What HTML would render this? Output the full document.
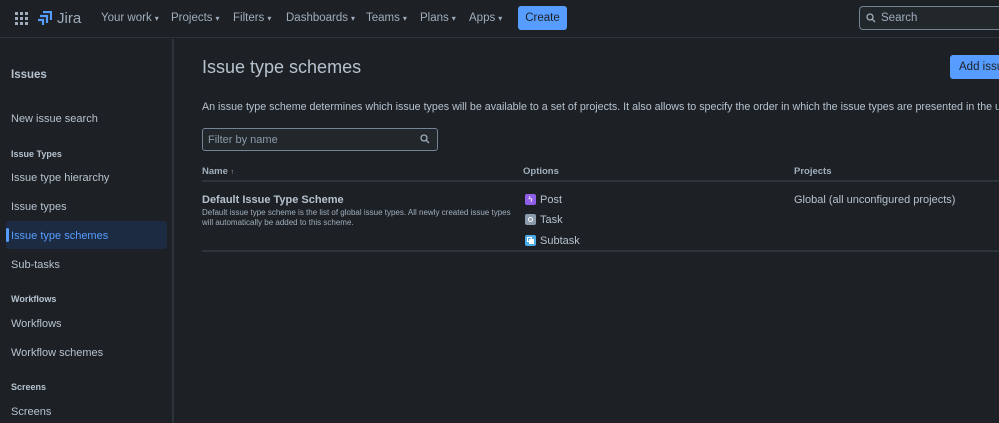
<!DOCTYPE html>
<html><head><style>
*{box-sizing:border-box;margin:0;padding:0}
html,body{width:999px;height:423px;overflow:hidden}
body{background:#1d2125;font-family:"Liberation Sans",sans-serif;color:#b6c2cf}
#w{position:relative;width:999px;height:423px;overflow:hidden}
.top{position:absolute;left:0;top:0;width:999px;height:38px;border-bottom:1px solid #2c333a;background:#1d2125}
.nav{position:absolute;top:12px;font-size:11.5px;color:#9fadbc}
.nav span{font-size:8px;margin-left:3px}
.create{position:absolute;left:518px;top:6px;width:49px;height:24px;background:#579dff;border-radius:3px;color:#1d2125;font-size:11.5px;text-align:center;line-height:24px}
.search{position:absolute;left:859px;top:6px;width:140px;height:24px;border:1px solid #738496;border-right:none;border-radius:4px 0 0 4px;background:#22272b;font-size:11.5px;color:#9fadbc;padding-left:21px;line-height:22px}
.side{position:absolute;left:0;top:39px;width:174px;height:384px;border-right:2px solid #2c333a}
.si{position:absolute;left:11px;font-size:11px;color:#b6c2cf}
.sh{position:absolute;left:11px;font-size:9px;font-weight:bold;color:#b6c2cf}
.sel{position:absolute;left:6px;width:161px;height:28px;background:#1c2b41;border-radius:3px}
.sel i{position:absolute;left:0;top:7px;width:3px;height:14px;background:#579dff;border-radius:2px}
.m{position:absolute}
</style></head><body><div id="w">
<div class="top">
<svg style="position:absolute;left:15px;top:12px" width="13" height="13" viewBox="0 0 13 13" fill="#9fadbc"><rect x="0" y="0" width="3" height="3"/><rect x="5" y="0" width="3" height="3"/><rect x="10" y="0" width="3" height="3"/><rect x="0" y="5" width="3" height="3"/><rect x="5" y="5" width="3" height="3"/><rect x="10" y="5" width="3" height="3"/><rect x="0" y="10" width="3" height="3"/><rect x="5" y="10" width="3" height="3"/><rect x="10" y="10" width="3" height="3"/></svg>
<svg style="position:absolute;left:37px;top:11px" width="15" height="15" viewBox="0 0 15 15" fill="none" stroke="#579dff" stroke-width="2.2"><path d="M3 5 H10 V12 M1 9 H6 V14 M6 1 H14 V9"/></svg>
<div style="position:absolute;left:57px;top:10px;font-size:15px;color:#9fadbc">Jira</div>
<div class="nav" style="left:101px">Your work<span>▾</span></div>
<div class="nav" style="left:171px">Projects<span>▾</span></div>
<div class="nav" style="left:233px">Filters<span>▾</span></div>
<div class="nav" style="left:286px">Dashboards<span>▾</span></div>
<div class="nav" style="left:366px">Teams<span>▾</span></div>
<div class="nav" style="left:420px">Plans<span>▾</span></div>
<div class="nav" style="left:469px">Apps<span>▾</span></div>
<div class="create">Create</div>
<div class="search">Search<svg style="position:absolute;left:6px;top:6px" width="10" height="10" viewBox="0 0 10 10" fill="none" stroke="#9fadbc" stroke-width="1.3"><circle cx="4" cy="4" r="3"/><path d="M6.3 6.3 L9 9"/></svg></div>
</div>
<div class="side">
<div class="sel" style="top:182px"><i></i></div>
<div class="si" style="top:30px;font-weight:bold;font-size:11.5px">Issues</div>
<div class="si" style="top:74px">New issue search</div>
<div class="sh" style="top:110px">Issue Types</div>
<div class="si" style="top:133px">Issue type hierarchy</div>
<div class="si" style="top:162px">Issue types</div>
<div class="si" style="top:191px;color:#579dff">Issue type schemes</div>
<div class="si" style="top:220px">Sub-tasks</div>
<div class="sh" style="top:255px">Workflows</div>
<div class="si" style="top:279px">Workflows</div>
<div class="si" style="top:308px">Workflow schemes</div>
<div class="sh" style="top:343px">Screens</div>
<div class="si" style="top:367px">Screens</div>
</div>
<div class="m" style="left:202px;top:57px;font-size:18px;color:#b6c2cf">Issue type schemes</div>
<div class="m" style="left:950px;top:55px;width:49px;height:24px;background:#579dff;border-radius:3px 0 0 3px;color:#1d2125;font-size:11.5px;line-height:24px;padding-left:9px;white-space:nowrap;overflow:hidden">Add issue</div>
<div class="m" style="left:202px;top:101px;width:797px;overflow:hidden;font-size:10.7px;white-space:nowrap">An issue type scheme determines which issue types will be available to a set of projects. It also allows to specify the order in which the issue types are presented in the user interface.</div>
<div class="m" style="left:202px;top:128px;width:236px;height:23px;border:1px solid #738496;border-radius:3px;background:#22272b;font-size:11px;color:#8c9bab;padding-left:5px;line-height:22px">Filter by name<svg style="position:absolute;right:7px;top:5px" width="10" height="10" viewBox="0 0 10 10" fill="none" stroke="#9fadbc" stroke-width="1.3"><circle cx="4" cy="4" r="3"/><path d="M6.3 6.3 L9 9"/></svg></div>
<div class="m" style="left:202px;top:166px;font-size:9.5px;font-weight:bold;color:#9fadbc">Name <span style="font-size:7px">↑</span></div>
<div class="m" style="left:523px;top:166px;font-size:9.5px;font-weight:bold;color:#9fadbc">Options</div>
<div class="m" style="left:794px;top:166px;font-size:9.5px;font-weight:bold;color:#9fadbc">Projects</div>
<div class="m" style="left:202px;top:180px;width:797px;height:2px;background:#2c333a"></div>
<div class="m" style="left:202px;top:194px;font-size:11px;font-weight:bold;color:#b6c2cf">Default Issue Type Scheme</div>
<div class="m" style="left:202px;top:208px;width:315px;font-size:8px;line-height:10px;color:#9fadbc">Default issue type scheme is the list of global issue types. All newly created issue types will automatically be added to this scheme.</div>
<div class="m" style="left:525px;top:194px;width:11px;height:11px;background:#8f5fe8;border-radius:2px;color:#fff;font-size:8px;text-align:center;line-height:11px">ϟ</div>
<div class="m" style="left:540px;top:194px;font-size:11px">Post</div>
<div class="m" style="left:525px;top:214px;width:11px;height:11px;background:#8c9bab;border-radius:2px"><div style="margin:3px;width:5px;height:5px;border:1px solid #fff;border-radius:50%"></div></div>
<div class="m" style="left:540px;top:214px;font-size:11px">Task</div>
<div class="m" style="left:525px;top:235px;width:11px;height:11px;background:#4bade8;border-radius:2px"><div style="position:absolute;left:2px;top:2px;width:5px;height:5px;border:1px solid #fff"></div><div style="position:absolute;left:4px;top:4px;width:5px;height:5px;background:#fff"></div></div>
<div class="m" style="left:540px;top:235px;font-size:11px">Subtask</div>
<div class="m" style="left:794px;top:194px;font-size:11px">Global (all unconfigured projects)</div>
<div class="m" style="left:202px;top:250px;width:797px;height:2px;background:#2c333a"></div>
</div></body></html>
